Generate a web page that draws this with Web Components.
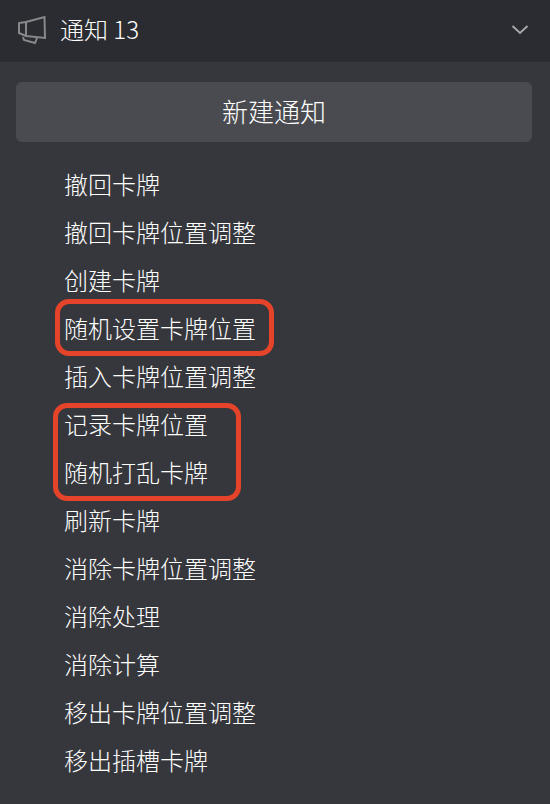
<!DOCTYPE html>
<html>
<head>
<meta charset="utf-8">
<style>
	html, body { margin: 0; height: 100%; background: #36373c; overflow: hidden; }
	body { font-family: "Noto Sans CJK SC", "Noto Sans", sans-serif; font-weight: 300; color: #fff; }
</style>
</head>
<body>
<notify-panel>
	<notify-header slot="header" label="通知 13"></notify-header>
	<new-button slot="action">新建通知</new-button>
	<notify-item>撤回卡牌</notify-item>
	<notify-item>撤回卡牌位置调整</notify-item>
	<notify-item>创建卡牌</notify-item>
	<notify-item>随机设置卡牌位置</notify-item>
	<notify-item>插入卡牌位置调整</notify-item>
	<notify-item>记录卡牌位置</notify-item>
	<notify-item>随机打乱卡牌</notify-item>
	<notify-item>刷新卡牌</notify-item>
	<notify-item>消除卡牌位置调整</notify-item>
	<notify-item>消除处理</notify-item>
	<notify-item>消除计算</notify-item>
	<notify-item>移出卡牌位置调整</notify-item>
	<notify-item>移出插槽卡牌</notify-item>
	<mark-box slot="marks" style="left:55px;top:138px;width:219px;height:57px"></mark-box>
	<mark-box slot="marks" style="left:53px;top:242px;width:188px;height:98px"></mark-box>
</notify-panel>

<script>
(function() {
	class NotifyPanel extends HTMLElement {
		constructor() {
			super();
			this.attachShadow({mode: "open"}).innerHTML = `
				<style>
				:host { display: block; }
				.action { display: block; padding: 20px 18px 19px 16px; }
				.list { position: relative; display: flex; flex-direction: column; }
				</style>
				<slot name="header"></slot>
				<div class="action"><slot name="action"></slot></div>
				<div class="list"><slot></slot><slot name="marks"></slot></div>
			`;
		}
	}

	class NotifyHeader extends HTMLElement {
		constructor() {
			super();
			this.attachShadow({mode: "open"}).innerHTML = `
				<style>
				:host {
					display: flex;
					align-items: center;
					height: 62px;
					padding: 0 22px 4px 17px;
					box-sizing: border-box;
					background: #2b2c31;
					font-size: 24px;
				}
				.label { margin-left: 13px; flex: 1; padding-bottom: 2px; }
				svg { display: block; overflow: visible; }
				</style>
				<svg width="30" height="28" viewBox="0 0 30 28" fill="none" stroke="#87888b" stroke-width="2">
					<path d="M27.5 2L28 23L9 21L2 18V8L9 7Z"/>
					<path d="M9 7V21"/>
					<path d="M6 22L7 25L18 28L20 23"/>
				</svg>
				<span class="label"></span>
				<svg width="16" height="9" viewBox="0 0 16 9" fill="none" stroke="#a9aaac" stroke-width="1.8">
					<path d="M0.5 1L8 8L15.5 1"/>
				</svg>
			`;
			this.shadowRoot.querySelector(".label").textContent = this.getAttribute("label");
		}
	}

	class NewButton extends HTMLElement {
		constructor() {
			super();
			this.attachShadow({mode: "open"}).innerHTML = `
				<style>
				:host {
					display: flex;
					align-items: center;
					justify-content: center;
					height: 60px;
					padding-bottom: 4px;
					box-sizing: border-box;
					border-radius: 6px;
					background: #4a4b50;
					font-size: 26px;
				}
				</style>
				<slot></slot>
			`;
		}
	}

	class NotifyItem extends HTMLElement {
		constructor() {
			super();
			this.attachShadow({mode: "open"}).innerHTML = `
				<style>
				:host {
					display: flex;
					align-items: center;
					height: 48px;
					padding: 0 0 4px 64px;
					box-sizing: border-box;
					font-size: 24px;
				}
				</style>
				<slot></slot>
			`;
		}
	}

	// red annotation frames drawn on top of the list
	class MarkBox extends HTMLElement {
		constructor() {
			super();
			this.attachShadow({mode: "open"}).innerHTML = `
				<style>
				:host {
					position: absolute;
					box-sizing: border-box;
					border: 5px solid #e5432a;
					border-radius: 14px;
				}
				</style>
			`;
		}
	}

	customElements.define("notify-panel", NotifyPanel);
	customElements.define("notify-header", NotifyHeader);
	customElements.define("new-button", NewButton);
	customElements.define("notify-item", NotifyItem);
	customElements.define("mark-box", MarkBox);
})();
</script>
</body>
</html>
